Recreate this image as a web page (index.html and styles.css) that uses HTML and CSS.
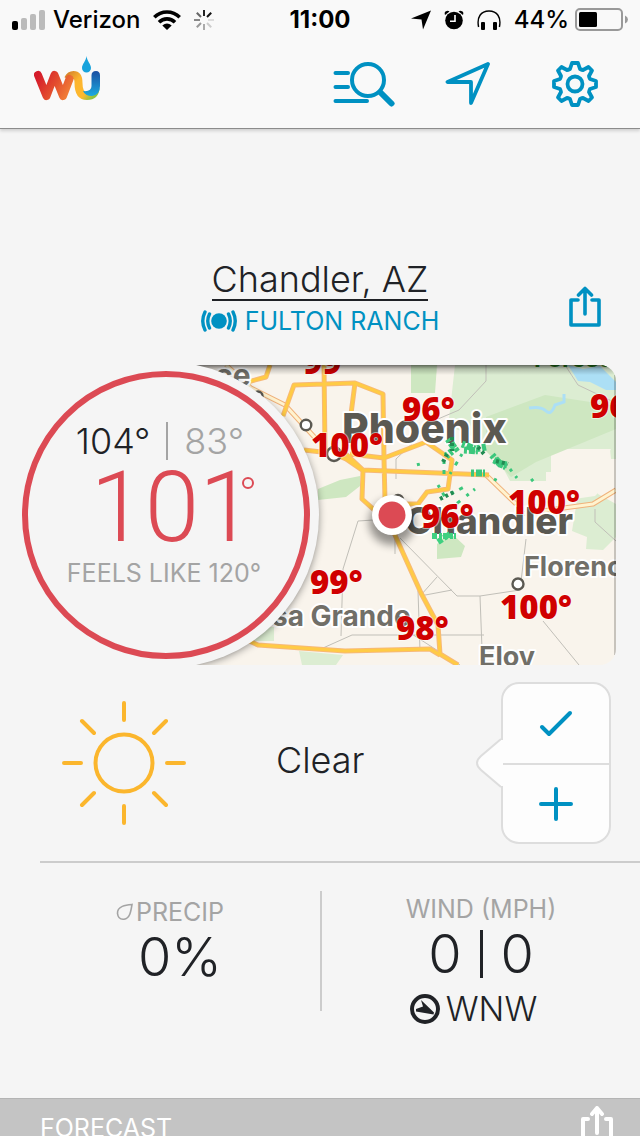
FILE: index.html
```html
<!DOCTYPE html>
<html lang="en">
<head>
<meta charset="utf-8">
<meta name="viewport" content="width=device-width, initial-scale=1">
<title>Chandler, AZ weather</title>
<link rel="stylesheet" href="styles.css">
</head>
<body>
<div class="app">
  <header class="header">
    <div class="status">
      <div class="status-left">
        <svg width="34" height="20" viewBox="0 0 34 20"><rect x="0" y="11" width="6" height="9" rx="2"/><g fill="#bbb"><rect x="9" y="8" width="6" height="12" rx="2"/><rect x="18" y="4" width="6" height="16" rx="2"/><rect x="27" y="0" width="6" height="20" rx="2"/></g></svg>
        <span>Verizon</span>
        <svg class="wifi" width="28" height="20" viewBox="0 0 28 20"><g fill="none" stroke="#000" stroke-width="3.6"><path d="M1.3 7.3C8.4.2 19.600.2 26.700 7.300"/><path d="M6 12.200C10.500 7.700 17.500 7.700 22 12.200"/></g><path d="M9.300 15.600Q14 11.600 18.700 15.600L14 20Z"/></svg>
        <svg width="20" height="20" viewBox="0 0 20 20" stroke-width="2" fill="none"><path d="M10 0v6" stroke="#222"/><path d="M13 7l4.200-4.200" stroke="#111"/><path d="M14 10h6" stroke="#ddd"/><path d="M13 13l4.200 4.200" stroke="#ccc"/><path d="M10 14v6" stroke="#aaa"/><path d="M7 13l-4.200 4.200" stroke="#999"/><path d="M6 10H0" stroke="#888"/><path d="M7 7L2.800 2.800" stroke="#666"/></svg>
      </div>
      <span class="clock">11:00</span>
      <div class="status-right">
        <svg width="20" height="20" viewBox="0 0 20 20"><path d="M20 .5L12 19.500L10.500 9.500L0 8.500Z"/></svg>
        <svg width="20" height="20" viewBox="0 0 20 20"><circle cx="10" cy="10.500" r="8.800"/><path d="M1 5Q0 2 2 1.200Q4 0 5.500 1.500M19 5Q20 2 18 1.200Q16 0 14.500 1.500"/><path d="M11 5v6.200H6" fill="none" stroke="#fff" stroke-width="1.600"/></svg>
        <svg width="24" height="20" viewBox="0 0 24 20"><path d="M1.600 17C-.5 7 4 1 12 1S24.500 7 22.400 17" fill="none" stroke="#000" stroke-width="1.400"/><rect x="4" y="12" width="4" height="8" rx="1"/><rect x="16" y="12" width="4" height="8" rx="1"/></svg>
        <span>44%</span>
        <svg width="53" height="24" viewBox="0 0 53 24"><rect x="1" y="1" width="46" height="21" rx="4" fill="none" stroke="#999" stroke-width="2"/><rect x="4" y="4" width="18" height="15" rx="1.500"/><path d="M50 7.500q3 1.500 3 4t-3 4z" fill="#999"/></svg>
      </div>
    </div>
    <nav class="nav">
      <a class="logo" href="#home" aria-label="WU home">
        <svg width="68" height="46" viewBox="0 0 68 46">
          <defs>
            <linearGradient id="warm" gradientUnits="userSpaceOnUse" x1="4" y1="20" x2="38" y2="40"><stop offset="0" stop-color="#d51c2b"/><stop offset=".45" stop-color="#e2492e"/><stop offset="1" stop-color="#f58a38"/></linearGradient>
            <linearGradient id="arc" gradientUnits="userSpaceOnUse" x1="35" y1="17" x2="63" y2="42"><stop offset="0" stop-color="#d9882d"/><stop offset=".3" stop-color="#fdb52f"/><stop offset=".68" stop-color="#fdb92f"/><stop offset=".9" stop-color="#8fc43f"/></linearGradient>
            <linearGradient id="cool" x1="0" y1="0" x2="0" y2="1"><stop offset="0" stop-color="#1c4fa2"/><stop offset="1" stop-color="#1aaae0"/></linearGradient>
          </defs>
          <path d="M34 23Q36 19 39.500 19Q44.500 19 44.500 27Q44.500 40 53 40Q61 40 61.500 32" fill="none" stroke="url(#arc)" stroke-width="8"/>
          <path d="M4 19L12.500 40L20.500 19L29 40L35.500 23" fill="none" stroke="url(#warm)" stroke-width="8" stroke-linecap="round" stroke-linejoin="round"/>
          <path d="M57.500 19.500Q57.500 15 62 15Q66 15 66 19.500V30Q66 39 58 40Q51 40 49 35Q57.500 36 57.500 30Z" fill="url(#cool)"/>
          <path d="M52.500 0C53 5 57 8 57 12A4.500 4.500 0 0 1 48 12C48 8 52 5 52.500 0Z" fill="#18a3dc"/>
        </svg>
      </a>
      <button class="icon-button" aria-label="Search">
        <svg width="62" height="46" viewBox="0 0 62 46" class="line"><g stroke-width="4"><path d="M2.500 12H15M2.500 26H15M2.500 40H34"/><circle cx="35" cy="19" r="16"/></g><path d="M48 32L58.500 42.500" stroke-width="6"/></svg>
      </button>
      <button class="icon-button locate" aria-label="Current location">
        <svg width="46" height="46" viewBox="0 0 46 46" class="line" stroke-width="3.800"><path d="M43 3L2.500 21H26V42Z"/></svg>
      </button>
      <button class="icon-button" aria-label="Settings">
        <svg width="48" height="48" viewBox="-24 -24 48 48" class="line" stroke-width="3.800"><circle r="7.500"/><path d="M-5 -15L-3 -21H3L5 -15Q7 -14 8 -14L13.500 -17L17 -13.500L14 -8Q14 -7 15 -5L21 -3V3L15 5Q14 7 14 8L17 13.500L13.500 17L8 14Q7 14 5 15L3 21H-3L-5 15Q-7 14 -8 14L-13.500 17L-17 13.500L-14 8Q-14 7 -15 5L-21 3V-3L-15 -5Q-14 -7 -14 -8L-17 -13.500L-13.500 -17L-8 -14Q-7 -14 -5 -15Z"/></svg>
      </button>
    </nav>
  </header>

  <main class="main">
    <section class="place">
      <div class="place-names">
        <h1><a class="city" href="#city">Chandler, AZ</a></h1>
        <a class="station" href="#station">
          <svg width="36" height="22" viewBox="0 0 36 22" fill="none" stroke="#0091c2" stroke-width="3.400" stroke-linecap="round"><circle cx="18" cy="11" r="7.800" fill="#0091c2" stroke="none"/><path d="M4 2Q-.5 11 4 20M8.500 4Q5 11 8.500 18M32 2Q36.500 11 32 20M27.500 4Q31 11 27.500 18"/></svg>
          <span>FULTON RANCH</span>
        </a>
      </div>
      <button class="icon-button share" aria-label="Share">
        <svg width="34" height="42" viewBox="0 0 34 42" class="line" stroke-width="3.600"><path d="M10 14H3V39H31V14H24M17 28V3M10.500 9L17 2.500L23.500 9"/></svg>
      </button>
    </section>

    <section class="current">
      <a class="map" href="#map" aria-label="Temperature map">
        <svg class="map-art" viewBox="164 366 452 300" preserveAspectRatio="xMinYMid slice">
          <defs>
            <filter id="soft" x="-20%" y="-20%" width="140%" height="140%"><feGaussianBlur stdDeviation="4"/></filter>
            <linearGradient id="edge" x1="0" y1="0" x2="0" y2="1"><stop offset="0" stop-opacity=".55"/><stop offset=".4" stop-opacity=".2"/><stop offset="1" stop-opacity="0"/></linearGradient>
          </defs>
          <path fill="#f9f4ec" d="M164 366h452v300H164z"/>
          <g fill="#dcedd2">
            <path d="M400 366H616V460H611L610 450H551V473H546V482H510L490 445L456 430L430 400L438 366Z"/>
            <path d="M578 495L597 478L598 495L616 505V538L603 551L586 550L587 538L572 532Z"/>
            <path d="M250 628h24v14h-24zM299 652L343 656L336 666H302Z"/>
          </g>
          <path fill="#f9f4ec" d="M438 366H455L449 420H425ZM551 450H611L600 471L612 480L595 497L574 500L551 490Z"/>
          <path fill="#f9f4ec" d="M390 366H411L409 394H436L430 425H390Z"/>
          <g fill="#cee7c1"><path d="M411 366h26l-2 28h-24zM486 418L545 396L616 407V430L536 463L511 478L486 452ZM318 490L340 481L360 477V487L346 498L318 501ZM437 545L450 533L465 547L461 558L437 560Z"/></g>
          <path fill="#acdff5" d="M568 366L583 370L600 367L616 383V391L606 391L590 383L578 382Z"/>
          <path d="M529 409Q541 407 546 412T555 406L564 403V395" fill="none" stroke="#acdff5" stroke-width="3"/>
          <g fill="none" stroke="#c1bfb8" stroke-width="1">
            <path d="M486 366V382L459 411L438 420L396 460V480M565 366L578 386L616 404M389 520L358 522L343 570L341 637M323 649L352 636H484M395 530V555M400 539L457 597H480L520 591L526 540M543 622L579 666M480 597L482 650M418 592L420 652M420 597L452 591M421 596L437 578M595 510V523L616 542M404 630L460 666"/>
          </g>
          <g fill="none" stroke-linejoin="round">
            <path stroke="#f0b27b" stroke-width="5" d="M226 366L251 389L285 406L318 442M485 475L516 505M520 515L593 505L616 491"/>
            <path stroke="#fff3cf" stroke-width="3" d="M226 366L251 389L285 406L318 442M485 475L516 505M520 515L593 505L616 491"/>
            <path stroke="#f7b977" stroke-width="5" d="M283 417L294 386L355 384L383 395L384 460L385 502M324 366L325 451L346 460L362 471L489 476M350 455L384 459L426 443L452 461L448 490L427 493L418 505H405M355 384L351 415M270 366L266 378L244 384M304 451L347 456L363 471L362 500L390 525L421 594L438 626L440 655L458 666M245 640L258 646L345 652L430 650L440 656"/>
            <path stroke="#ffcb45" stroke-width="3" d="M283 417L294 386L355 384L383 395L384 460L385 502M324 366L325 451L346 460L362 471L489 476M350 455L384 459L426 443L452 461L448 490L427 493L418 505H405M355 384L351 415M270 366L266 378L244 384M304 451L347 456L363 471L362 500L390 525L421 594L438 626L440 655L458 666M245 640L258 646L345 652L430 650L440 656"/>
          </g>
          <g fill="#fff" stroke="#5b5952" stroke-width="2.400"><circle cx="258" cy="397" r="4.500"/><circle cx="306" cy="426" r="5.300"/><circle cx="334" cy="455" r="7"/><circle cx="398" cy="501" r="5"/><circle cx="518" cy="585" r="5.500"/></g>
          <g class="place-labels">
            <text x="215" y="387" font-size="30">ce</text>
            <text class="major" x="342" y="444" font-size="41">Phoenix</text>
            <text class="major" x="405" y="535" font-size="37">Chandler</text>
            <text x="272" y="627" font-size="28">sa Grande</text>
            <text x="524" y="577" font-size="27">Florence</text>
            <text x="479" y="667" font-size="27">Eloy</text>
            <text class="forest" x="534" y="368" font-size="24">Forest</text>
          </g>
          <g fill="none" stroke="#3bc77c" stroke-width="7" stroke-dasharray="3 2 6 1 2 2"><path d="M448 440L455 450L446 457M462 445L475 450L486 448M492 456L500 465L508 466M471 474H485"/><path stroke-width="7" d="M464 451L480 452M494 461L506 468"/><path stroke-width="3" stroke-dasharray="3 6 4 8" d="M444 462V480M462 455L450 475M438 486L445 498L464 488M450 510L475 490M418 464L420 472M510 470L517 479M531 482L536 478M494 480L502 484"/></g>
          <path d="M432 537H456M438 543L450 535" stroke="#3fd080" stroke-width="6" stroke-dasharray="5 2 3 1" fill="none"/>
          <g fill="none" stroke="#218b52" stroke-width="4" stroke-dasharray="3 3"><path d="M452 438V452M478 448L484 455M496 462L508 465M440 500L456 492M447 455L443 463"/></g>
          <g class="temps">
            <text x="303" y="375">99°</text><text x="402" y="422">96°</text><text x="590" y="419">96°</text><text x="311" y="458">100°</text><text x="421" y="529">96°</text><text x="508" y="515">100°</text><text x="310" y="595">99°</text><text x="500" y="620">100°</text><text x="396" y="641">98°</text>
          </g>
          <path d="M164 366h452v10H164z" fill="url(#edge)"/>
          <path d="M615 376V656" stroke="#000" stroke-opacity=".2" stroke-width="2"/>
          <circle cx="392" cy="523" r="23" opacity=".4" filter="url(#soft)"/>
          <circle cx="392" cy="516" r="20" fill="#fff"/><circle cx="392" cy="516" r="13.500" fill="#dc4a54"/>
          <circle cx="167" cy="518" r="151" opacity=".5" filter="url(#soft)"/>
          <circle cx="166" cy="516" r="153" fill="#f5f5f5"/>
        </svg>
      </a>
      <div class="dial">
        <div class="range"><span class="high">104°</span><span class="low">83°</span></div>
        <div class="temp">101<span class="degree"></span></div>
        <div class="feels">FEELS LIKE 120°</div>
      </div>
    </section>

    <section class="condition">
      <svg class="sun" width="124" height="124" viewBox="-62 -62 124 124"><circle r="28.500"/><path d="M0-60v17M0 60V43M-60 0h17M60 0H43M-42-42l12 12M42 42L30 30M-42 42l12-12M42-42L30-30"/></svg>
      <p class="sky">Clear</p>
      <div class="verify">
        <svg class="pointer" width="28" height="52" viewBox="0 0 28 52"><path d="M26 2L6 19Q-2 26 6 33L26 50" fill="#fdfdfd" stroke="#ddd" stroke-width="2"/><path d="M26 3h2v46h-2z" fill="#fdfdfd"/></svg>
        <button class="verify-button" aria-label="Confirm conditions"><svg width="36" height="32" viewBox="0 0 36 32" class="line" stroke-width="4"><path d="M4 19L11 26L32 5"/></svg></button>
        <button class="verify-button" aria-label="Add report"><svg width="36" height="36" viewBox="0 0 36 36" class="line" stroke-width="4"><path d="M18 3V33M3 18H33"/></svg></button>
      </div>
    </section>

    <section class="metrics">
      <div class="metric">
        <h2 class="label"><svg width="18" height="18" viewBox="0 0 18 18" fill="none" stroke="#a4a4a4" stroke-width="1.600"><path d="M16 1.500C10 2 1 3 1.500 10.500C2 15 5 16.500 8 16.200C14 15.500 15 8 16 1.500Z"/></svg>PRECIP</h2>
        <p class="value">0%</p>
      </div>
      <div class="metric wind">
        <h2 class="label">WIND (MPH)</h2>
        <p class="value pair"><span>0</span><span class="bar"></span><span>0</span></p>
        <p class="direction"><svg width="32" height="32" viewBox="0 0 32 32"><circle cx="16" cy="16" r="13" fill="none" stroke="#202226" stroke-width="4"/><path d="M12 7L25 19.500L24.500 21.500L7 18.500L7 16L14 13.500Z" fill="#202226"/></svg>WNW</p>
      </div>
    </section>
  </main>

  <section class="forecast">
    <h2 class="forecast-title">FORECAST</h2>
    <button class="icon-button" aria-label="Share forecast"><svg width="34" height="42" viewBox="0 0 34 42" class="line light" stroke-width="4"><path d="M8 14H3V39H31V14H26M17 28V3M12 9L17 3L22 9"/></svg></button>
  </section>
</div>
</body>
</html>
```
FILE: styles.css
```css
* { box-sizing: border-box; }
body { margin: 0; background: #f5f5f5; color: #202226; font-family: "Inter", "Liberation Sans", sans-serif; }
h1, h2, p { margin: 0; font-weight: 400; }
a { color: inherit; text-decoration: none; }
button { border: 0; padding: 0; background: none; }
svg { display: block; flex: none; }
.app { display: flex; flex-direction: column; height: 100vh; overflow: hidden; }
.main { flex: none; }
.line { fill: none; stroke: #0091c2; stroke-linecap: round; stroke-linejoin: round; }
.light { stroke: #fff; }
.icon-button { display: block; }

.header { flex: none; background: #f9f9f9; border-bottom: 1px solid #8c8c8c; box-shadow: 0 2px 3px #d0d0d0; }
.status { display: grid; grid-template-columns: 1fr auto 1fr; align-items: center; height: 40px; padding: 0 12px; font: 500 24px/40px "Inter", sans-serif; color: #000; }
.status-left, .status-right { display: flex; align-items: center; gap: 7px; }
.wifi { margin: 0 6px; }
.status-right { justify-content: flex-end; gap: 12px; }
.status-right span { margin: 0 -6px 0 0; }
.clock { font-weight: 700; }
.status-right svg:nth-child(-n+3) { margin-right: 1px; }
.nav { display: flex; align-items: center; height: 88px; padding: 0 41px 0 34px; }
.logo { margin: -10px auto 0 0; }
.locate { margin: 0 60px 0 50px; }

.place { display: grid; grid-template-columns: 1fr auto 1fr; padding: 130px 38px 24px; }
.place-names { grid-column: 2; text-align: center; }
.city { display: inline-block; font-size: 36px; line-height: 40px; font-weight: 300; border-bottom: 2px solid #202226; }
.station { display: flex; align-items: center; justify-content: center; gap: 8px; color: #0091c2; font-size: 25px; line-height: 40px; }
.share { justify-self: end; align-self: start; margin-top: 27px; }

.current { display: grid; grid-template-columns: 22px 142px 146px 1fr 24px; align-items: center; }
.map { grid-area: 1 / 3 / 2 / 5; overflow: hidden; height: 300px; border-radius: 0 16px 16px 0; }
.map-art { width: 100%; height: 100%; }
.place-labels text { font-family: "Inter", sans-serif; font-weight: 700; fill: #716f68; stroke: #fff; stroke-width: 4px; paint-order: stroke; stroke-linejoin: round; }
.place-labels .major { font-weight: 800; fill: #5b5952; }
.place-labels .forest { fill: #237a1a; stroke: none; }
.temps text { font: 800 33px "Open Sans", sans-serif; fill: #d00000; stroke: #fff; stroke-width: 2px; stroke-opacity: .5; paint-order: stroke; }
.dial { grid-area: 1 / 2 / 2 / 4; position: relative; width: 288px; height: 288px; border: 6px solid #dc4a54; border-radius: 50%; background: #f5f5f5; display: flex; flex-direction: column; align-items: center; padding-top: 45px; }
.range { display: flex; font-size: 36px; line-height: 38px; font-weight: 300; margin-right: 12px; }
.high { padding-right: 16px; border-right: 2px solid #a4a4a4; }
.low { padding-left: 16px; color: #a4a4a4; }
.temp { display: flex; color: #dc4a54; font-family: "Roboto", sans-serif; font-size: 98px; line-height: 96px; font-weight: 300; }
.degree { width: 12px; height: 12px; border: 2px solid #dc4a54; border-radius: 50%; margin: 17px -12px 0 -12px; }
.feels { color: #a4a4a4; font-size: 25px; line-height: 34px; margin-right: 4px; }

.condition { display: grid; grid-template-columns: 124px 1fr 110px; align-items: center; margin-left: 40px; padding: 17px 29px 17px 22px; border-bottom: 2px solid #ccc; }
.sun { fill: none; stroke: #fbb62d; stroke-width: 4px; stroke-linecap: round; }
.sky { font-size: 36px; line-height: 44px; font-weight: 300; padding: 0 0 6px 90px; }
.verify { position: relative; height: 162px; display: grid; grid-template-rows: 1fr 1fr; background: #fdfdfd; border: 2px solid #ddd; border-radius: 18px; }
.verify-button { display: grid; place-items: center; }
.verify-button + .verify-button { border-top: 2px solid #ddd; }
.pointer { position: absolute; left: -28px; top: 53px; }

.metrics { display: grid; grid-template-columns: 1fr 1fr; padding: 28px 0 87px; }
.metric { display: flex; flex-direction: column; align-items: center; height: 120px; padding: 5px 0 0 40px; }
.metric .label svg { margin-left: -20px; }
.wind { border-left: 2px solid #ccc; padding: 2px 0 0; }
.label { display: flex; align-items: center; gap: 2px; color: #a4a4a4; font-size: 25px; line-height: 32px; }
.value { font-size: 54px; line-height: 58px; font-weight: 300; }
.pair { display: flex; align-items: center; gap: 18px; }
.bar { width: 3px; height: 48px; background: #202226; }
.direction { display: flex; align-items: center; gap: 5px; font-size: 34px; line-height: 52px; font-weight: 300; padding-right: 16px; }

.forecast { flex: none; display: flex; align-items: flex-start; justify-content: space-between; height: 72px; padding: 6px 26px 0 40px; border-top: 1px solid #b4b4b4; background: #c4c4c4; color: #fff; }
.forecast-title { font-size: 25px; line-height: 46px; }
```
